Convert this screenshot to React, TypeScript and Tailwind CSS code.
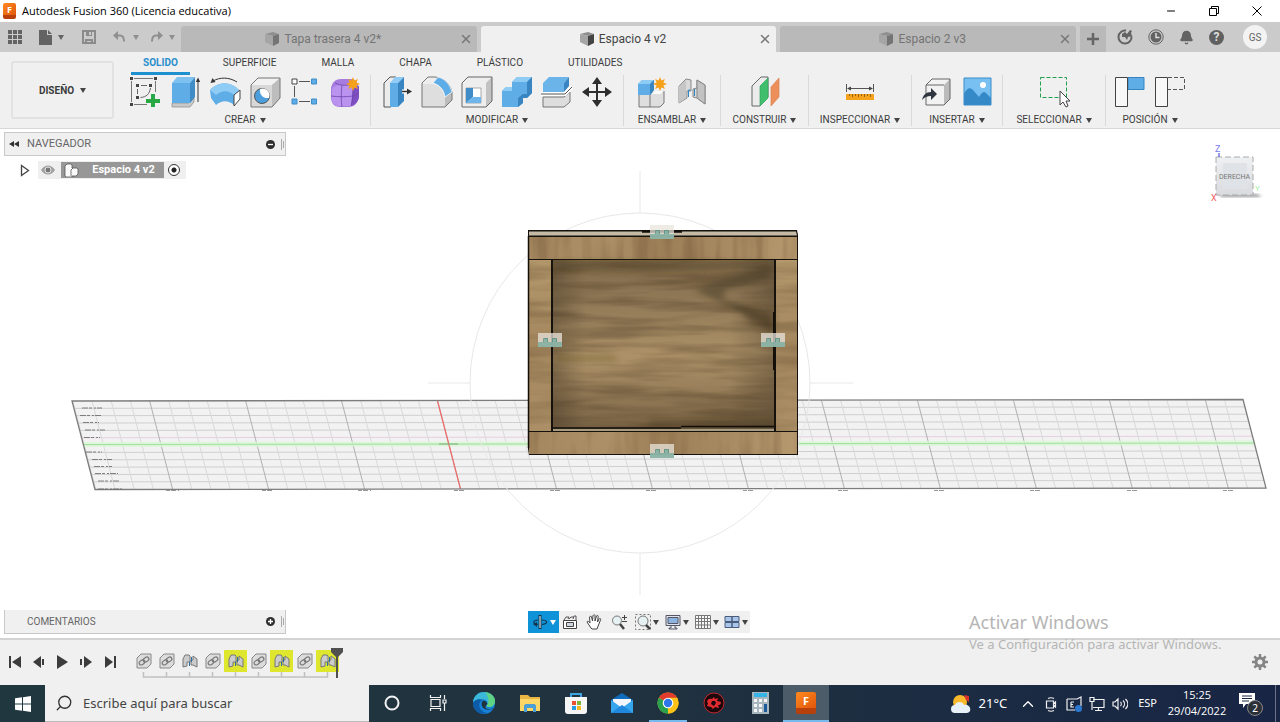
import type { ReactNode } from 'react'
import { Bell, X, Minus, ChevronUp, Search } from 'lucide-react'

const Caret = ({ className = 'text-[#444]' }: { className?: string }) => (
  <svg viewBox="0 0 6 5" className={`h-[5px] w-[6px] shrink-0 ${className}`} aria-hidden="true">
    <path d="M0 0h6L3 5z" fill="currentColor" />
  </svg>
)

const Ico = ({ children, className = 'h-8 w-8', box = '0 0 32 32' }: { children: ReactNode; className?: string; box?: string }) => (
  <svg viewBox={box} fill="none" className={`shrink-0 ${className}`} aria-hidden="true">
    {children}
  </svg>
)

/* ---------- ribbon icons ---------- */

const Spark = ({ x, y }: { x: number; y: number }) => (
  <path
    transform={`translate(${x} ${y})`}
    d="M0-7l1.500 3.600L5-5 3.400-1.500 7 0 3.400 1.500 5 5 1.500 3.400 0 7l-1.500-3.600L-5 5l1.600-3.500L-7 0l3.600-1.500L-5-5l3.500 1.600z"
    fill="#f5a11c"
  />
)

const SketchIcon = () => (
  <Ico>
    <path d="M5 2.500h19M2.500 5v21M5 28.500h13M26.500 5v11" stroke="#777" />
    <path d="M1 1h3v3H1zM25 1h3v3h-3zM1 27h3v3H1zM7 8h3v3H7zM20 8h3v3h-3zM7 20h3v3H7z" fill="#444" />
    <path d="M12 9.500h6M8.500 13v5M21.500 12c-1 6-4 9-10 9.500" stroke="#666" />
    <path d="M22 18h4v5h5v4h-5v4h-4v-4h-5v-4h5z" fill="#27a844" />
  </Ico>
)

const ExtrudeIcon = () => (
  <Ico>
    <path d="M3 27h17l5-5v4l-4 5H3z" fill="#c9c9c9" stroke="#888" strokeWidth=".7" />
    <path d="M3 7l5-6h18l-5 6z" fill="#7dc1f1" />
    <path d="M3 7h18v20H3z" fill="#5fade6" />
    <path d="M21 7l5-6v20l-5 6z" fill="#3f8cc7" />
    <path d="M29 26V4" stroke="#333" />
    <path d="M26.800 6L29 1.500 31.200 6z" fill="#333" />
  </Ico>
)

const RevolveIcon = () => (
  <Ico>
    <path d="M1 14c8-9 21-9 29 0l-5 6v9c-6-5-12-5-18 0L2 22z" fill="#5fade6" />
    <path d="M1 14c8-9 21-9 29 0l-5 5c-6-5-12-5-18 0z" fill="#8ecbf5" />
    <path d="M25 19l6-5v9l-6 7z" fill="#fff" stroke="#444" />
    <path d="M4 5c7-4 16-4 24 1" stroke="#333" />
    <path d="M1.500 7l2-5 3 4z" fill="#333" />
  </Ico>
)

const CubeBody = () => (
  <>
    <path d="M2 9l7-7h22v20l-8 9H2z" fill="#d8d8d8" />
    <path d="M2 9l7-7h22l-8 7z" fill="#f1f1f1" />
    <path d="M23 9l8-7v20l-8 9z" fill="#bdbdbd" />
    <path d="M2 9l7-7h22v20l-8 9H2z" stroke="#777" />
  </>
)

const HoleIcon = () => (
  <Ico>
    <CubeBody />
    <circle cx="13" cy="20" r="7.500" fill="#4c9fdc" stroke="#555" />
    <path d="M11 12.900a7 7 0 0 1 9 9C15 23 10 19 11 12.900z" fill="#fff" />
  </Ico>
)

const PatternIcon = () => (
  <Ico>
    <path d="M10 5.500h11M5.500 10v11M10 25.500h11" stroke="#555" />
    <path d="M3 3h5v5H3z" fill="#fff" stroke="#444" />
    <path d="M22.500 3h5v5h-5zM22.500 23h5v5h-5zM3 23h5v5H3z" fill="#5fade6" stroke="#3f8cc7" />
  </Ico>
)

const FormIcon = () => (
  <Ico>
    <path d="M2 12c1-6 5-9 10-9h10c5 1 7 4 8 9v9c-1 6-5 10-10 10h-9C5 31 2 27 2 21z" fill="#a77be0" />
    <path d="M3 13c3-6 17-5 21-1l-2 18H9c-4-1-7-4-6-9z" fill="#b993ee" />
    <path d="M24 12l6-2v11c-1 5-4 8-8 9z" fill="#7d4fc0" />
    <path d="M2 20c7 1 15 1 22 0l6-3M13 9c-1 7-1 15 0 22M24 11c0 8 0 13-2 19M6 7c6 3 13 3 19 0" stroke="#6f45ae" strokeWidth=".8" />
    <Spark x={24} y={8} />
  </Ico>
)

const PressPullIcon = () => (
  <Ico>
    <path d="M3 7l6-6h6v24l-5 6H3z" fill="#ececec" stroke="#555" />
    <path d="M9 7h8v24H9z" fill="#5fade6" />
    <path d="M9 7l5-6h9l-6 6z" fill="#8ecbf5" />
    <path d="M17 7l6-6v24l-6 6z" fill="#3985c2" />
    <path d="M21 15.500h6" stroke="#fff" strokeWidth="4" />
    <path d="M21 15.500h6" stroke="#333" strokeWidth="1.500" />
    <path d="M26 12.500l5 3-5 3z" fill="#333" />
  </Ico>
)

const FilletIcon = () => (
  <Ico>
    <path d="M1 7l6-6h7c9 1 15 7 17 15v8l-7 7H1z" fill="#ededed" />
    <path d="M1 8h8c8 0 14 6 15 13v10H1z" fill="#dedede" />
    <path d="M24 21l7-5v8l-7 7z" fill="#bcbcbc" />
    <path d="M1 7l6-6h7c9 1 15 7 17 15v8l-7 7H1z" stroke="#777" />
    <path d="M12 7l5-6c8 2 12 8 14 15l-7 5c-1-7-5-12-12-14z" fill="#5fade6" stroke="#fff" strokeWidth=".7" />
  </Ico>
)

const ShellIcon = () => (
  <Ico>
    <path d="M1 7l6-6h24v24l-6 6H1z" fill="#eee" />
    <path d="M25 7l6-6v24l-6 6z" fill="#c2c2c2" />
    <path d="M1 7l6-6h24v24l-6 6H1z" stroke="#666" />
    <path d="M5 12h15v15H5z" fill="#fff" stroke="#888" strokeWidth=".7" />
    <path d="M5 12h7v9l-7 6z" fill="#3f8cc7" />
    <path d="M12 21h8v6H5z" fill="#6db5eb" />
  </Ico>
)

const CombineIcon = () => (
  <Ico>
    <path d="M1 15l4-4h6V6l5-5h15v16l-5 5h-4v5l-5 4H1z" fill="#5fade6" />
    <path d="M1 15l4-4h6v4zM11 6l5-5h15l-5 5z" fill="#8ecbf5" />
    <path d="M26 6l5-5v16l-5 5h-4v5l-5 4v-9l5-4h4z" fill="#3985c2" />
  </Ico>
)

const SplitIcon = () => (
  <Ico>
    <path d="M2 7l6-6h20l-5 6v9H2z" fill="#6bb4ea" />
    <path d="M23 7l5-6v9l-5 6z" fill="#3985c2" />
    <path d="M2 21h21l6-5v10l-6 5H2z" fill="#ddd" stroke="#777" />
    <path d="M0 18h24l7-7" stroke="#fff" strokeWidth="4" />
    <path d="M0 18h24l7-7" stroke="#555" />
  </Ico>
)

const MoveIcon = () => (
  <Ico>
    <path d="M16 5v22M5 16h22" stroke="#2e2e2e" strokeWidth="2" />
    <path d="M16 1l5 7H11zM16 31l-5-7h10zM1 16l7-5v10zM31 16l-7 5V11z" fill="#2e2e2e" />
  </Ico>
)

const NewComponentIcon = () => (
  <Ico>
    <path d="M3 17h22l3-2v12l-4 4H3z" fill="#dedede" stroke="#777" />
    <path d="M14 18v13" stroke="#777" />
    <path d="M15 18l4-3h9l-3 3z" fill="#fafafa" />
    <path d="M2 8l4-4h12v10l-4 5H2z" fill="#5fade6" />
    <path d="M2 8l4-4h12l-4 4z" fill="#8ecbf5" />
    <path d="M14 8l4-4v10l-4 5z" fill="#3985c2" />
    <Spark x={24} y={8} />
  </Ico>
)

const JointIcon = () => (
  <Ico>
    <path d="M3 10l7-7 5 1v11h-4v7l-8 5z" fill="#d9d9d9" stroke="#888" />
    <path d="M3 10l7-6v18l-7 5z" fill="#c6c6c6" />
    <path d="M29 9l-8-5v8l-4 1v8l4 1 8 6z" fill="#d9d9d9" stroke="#888" />
    <path d="M21 4l8 5v19l-8-6z" fill="#c2c2c2" stroke="#888" />
    <path d="M12.500 14v7M12.500 14h2M18.500 13v7" stroke="#2d88c9" />
  </Ico>
)

const PlaneIcon = () => (
  <Ico>
    <path d="M3 10l9-9h7v20l-8 9H3z" fill="#ececec" stroke="#666" />
    <path d="M11 10l8-8v20l-8 8z" fill="#3fbf6d" stroke="#35a860" strokeWidth=".7" />
    <path d="M22 11l8-9v19l-8 9z" fill="#ec8f5b" stroke="#dd8250" strokeWidth=".7" />
  </Ico>
)

const MeasureIcon = () => (
  <Ico>
    <path d="M2.500 8v8M29.500 8v8M5 12.500h22" stroke="#555" />
    <path d="M3 12.500l4-2v4zM29 12.500l-4-2v4z" fill="#444" />
    <path d="M2 18h28v6H2z" fill="#f5a31c" />
    <path d="M5.500 18v2M8.500 18v3M11.500 18v2M14.500 18v3M17.500 18v2M20.500 18v3M23.500 18v2M26.500 18v3" stroke="#7b5410" strokeWidth=".8" />
  </Ico>
)

const InsertIcon = () => (
  <Ico>
    <path d="M5 9l6-6h18v20l-6 6H5z" fill="#f2f2f2" />
    <path d="M23 9l6-6v20l-6 6z" fill="#bbb" />
    <path d="M5 9h18M5 9l6-6h18v20l-6 6H5z" stroke="#666" />
    <path d="M1 24c1-5 4-8 9-8v-4l6 6-6 6v-4c-4 0-6 1-9 4z" fill="#2f3640" />
  </Ico>
)

const CanvasIcon = () => (
  <Ico>
    <path d="M3 2h27v27H3z" fill="#78bff2" />
    <path d="M3 18c3-6 6-7 9-4l6 7c3-5 5-6 7-4l5 5v7H3z" fill="#3489c6" />
    <circle cx="22" cy="9" r="3" fill="#fff" />
    <path d="M3 2h27v27H3z" stroke="#3b8dca" />
  </Ico>
)

const SelectIcon = () => (
  <Ico>
    <path d="M2.500 1.500h26v20h-26z" stroke="#1fa04c" strokeDasharray="4 2" />
    <path d="M22 15v14l3-3 3 5 2-1-2-5h4z" fill="#fff" stroke="#444" />
  </Ico>
)

const CaptureIcon = () => (
  <Ico>
    <path d="M14 1.500h16v12H14z" fill="#5fade6" stroke="#3985c2" />
    <path d="M1.500 1.500h12v29h-12z" fill="#f8f8f8" stroke="#444" />
  </Ico>
)

const RevertIcon = () => (
  <Ico>
    <path d="M14 1.500h16.500v12H14" stroke="#555" strokeDasharray="4 2" />
    <path d="M1.500 1.500h12v29h-12z" fill="#f8f8f8" stroke="#444" />
  </Ico>
)

type Tool = { name: string; icon: ReactNode }
type Group = { label: string; width: string; tools: Tool[] }

const groups: Group[] = [
  {
    label: 'CREAR',
    width: 'w-[251px]',
    tools: [
      { name: 'Crear boceto', icon: <SketchIcon /> },
      { name: 'Extrusión', icon: <ExtrudeIcon /> },
      { name: 'Revolución', icon: <RevolveIcon /> },
      { name: 'Agujero', icon: <HoleIcon /> },
      { name: 'Patrón', icon: <PatternIcon /> },
      { name: 'Crear forma', icon: <FormIcon /> },
    ],
  },
  {
    label: 'MODIFICAR',
    width: 'w-[253px]',
    tools: [
      { name: 'Pulsar/Tirar', icon: <PressPullIcon /> },
      { name: 'Empalme', icon: <FilletIcon /> },
      { name: 'Vaciado', icon: <ShellIcon /> },
      { name: 'Combinar', icon: <CombineIcon /> },
      { name: 'Dividir', icon: <SplitIcon /> },
      { name: 'Desplazar', icon: <MoveIcon /> },
    ],
  },
  {
    label: 'ENSAMBLAR',
    width: 'w-[97px]',
    tools: [
      { name: 'Nuevo componente', icon: <NewComponentIcon /> },
      { name: 'Unión', icon: <JointIcon /> },
    ],
  },
  { label: 'CONSTRUIR', width: 'w-[88px]', tools: [{ name: 'Plano de desfase', icon: <PlaneIcon /> }] },
  { label: 'INSPECCIONAR', width: 'w-[103px]', tools: [{ name: 'Medir', icon: <MeasureIcon /> }] },
  {
    label: 'INSERTAR',
    width: 'w-[91px]',
    tools: [
      { name: 'Insertar derivado', icon: <InsertIcon /> },
      { name: 'Lienzo', icon: <CanvasIcon /> },
    ],
  },
  { label: 'SELECCIONAR', width: 'w-[103px]', tools: [{ name: 'Seleccionar', icon: <SelectIcon /> }] },
  {
    label: 'POSICIÓN',
    width: 'w-[88px]',
    tools: [
      { name: 'Capturar posición', icon: <CaptureIcon /> },
      { name: 'Revertir', icon: <RevertIcon /> },
    ],
  },
]

const ribbonTabs = ['SOLIDO', 'SUPERFICIE', 'MALLA', 'CHAPA', 'PLÁSTICO', 'UTILIDADES']

/* ---------- header ---------- */

const FusionLogo = ({ className }: { className: string }) => (
  <span className={`flex shrink-0 flex-col items-center rounded-[2px] bg-gradient-to-br from-[#ff8a1f] to-[#e0560a] font-bold leading-none text-white ${className}`}>
    F
  </span>
)

const TitleBar = () => (
  <header className="flex h-[22px] items-center bg-white pl-[3px] font-['Open_Sans',sans-serif]">
    <FusionLogo className="h-4 w-[13px] border-b-4 border-[#b8400a] pt-[2px] text-[9px]" />
    <h1 className="ml-[6px] flex-1 text-[11px] text-black">Autodesk Fusion 360 (Licencia educativa)</h1>
    <div className="flex h-5 items-center pr-[2px] text-black">
      <button aria-label="Minimizar" className="flex w-[43px] justify-center"><Minus size={12} strokeWidth={2} /></button>
      <button aria-label="Restaurar" className="flex w-[43px] justify-center">
        <Ico box="0 0 10 10" className="h-[10px] w-[10px]">
          <path d="M.5 2.500h7v7h-7zM2.500 2.500v-2h7v7h-2" stroke="#000" />
        </Ico>
      </button>
      <button aria-label="Cerrar" className="flex w-[43px] justify-center">
        <Ico box="0 0 10 10" className="h-[10px] w-[10px]">
          <path d="M.5.5l9 9M9.500.5l-9 9" stroke="#000" />
        </Ico>
      </button>
    </div>
  </header>
)

const DocCube = () => (
  <Ico box="0 0 16 16" className="h-4 w-4">
    <path d="M1 3l8-2 6 2-6 2z" fill="#8f8f8f" />
    <path d="M1 3l8 2v10l-8-4z" fill="#a5a5a5" />
    <path d="M9 5l6-2v9l-6 3z" fill="currentColor" />
  </Ico>
)

const DocTab = ({ title, active = false }: { title: string; active?: boolean }) => (
  <div
    className={`flex flex-1 items-center rounded-t-[3px] pr-1 text-[12px] ${
      active ? 'bg-[#f0f0f0] text-[#444]' : 'bg-[#b9b9b9] text-[#747474]'
    }`}
  >
    <button className="flex flex-1 items-center justify-center gap-1 pl-[6px]">
      <DocCube />
      {title}
    </button>
    <button aria-label={`Cerrar ${title}`} className="text-[#777]"><X size={14} strokeWidth={2.5} /></button>
  </div>
)

const QuickBar = () => (
  <div className="flex h-[30px] bg-[#cbcbcb] text-[#636363]">
    <div className="flex w-[181px] shrink-0 items-center pl-2">
      <button aria-label="Panel de datos">
        <Ico box="0 0 14 14" className="h-[14px] w-[14px]">
          <path d="M0 0h4v4H0zM5 0h4v4H5zM10 0h4v4h-4zM0 5h4v4H0zM5 5h4v4H5zM10 5h4v4h-4zM0 10h4v4H0zM5 10h4v4H5zM10 10h4v4h-4z" fill="currentColor" />
        </Ico>
      </button>
      <button aria-label="Archivo" className="ml-[17px] flex items-center gap-[6px]">
        <Ico box="0 0 13 15" className="h-[15px] w-[13px]">
          <path d="M0 0h8v5h5v10H0z" fill="currentColor" />
          <path d="M9 0l4 4H9z" fill="currentColor" />
        </Ico>
        <Caret className="text-[#636363]" />
      </button>
      <button aria-label="Guardar" className="ml-[18px] text-[#8b8b8b]">
        <Ico box="0 0 14 14" className="h-[14px] w-[14px]">
          <path d="M1 1h12v12H1z" stroke="currentColor" strokeWidth="2" />
          <path d="M4 1h6v5H4zM3 9h8v5H3z" fill="currentColor" />
          <path d="M7 2h2v3H7zM5 11h4v1H5z" fill="#cbcbcb" />
        </Ico>
      </button>
      <button aria-label="Deshacer" className="ml-[17px] flex items-center gap-2 text-[#8f8f8f]">
        <Ico box="0 0 12 12" className="h-3 w-3">
          <path d="M3 4.500h4c3 0 4 2 4 6" stroke="currentColor" strokeWidth="2" />
          <path d="M0 4.500L5 0v9z" fill="currentColor" />
        </Ico>
        <Caret className="text-[#8f8f8f]" />
      </button>
      <button aria-label="Rehacer" className="ml-3 flex items-center gap-[6px] text-[#8f8f8f]">
        <Ico box="0 0 12 12" className="h-3 w-3">
          <path d="M9 4.500H5c-3 0-4 2-4 6" stroke="currentColor" strokeWidth="2" />
          <path d="M12 4.500L7 0v9z" fill="currentColor" />
        </Ico>
        <Caret className="text-[#8f8f8f]" />
      </button>
    </div>
    <nav className="flex flex-1 gap-1 pt-1" aria-label="Documentos">
      <DocTab title="Tapa trasera 4 v2*" />
      <DocTab title="Espacio 4 v2" active />
      <DocTab title="Espacio 2 v3" />
      <button aria-label="Nuevo diseño" className="flex w-[26px] items-center justify-center bg-[#b9b9b9]">
        <Ico box="0 0 12 12" className="h-3 w-3"><path d="M6 0v12M0 6h12" stroke="#666" strokeWidth="2.500" /></Ico>
      </button>
    </nav>
    <div className="flex w-[174px] shrink-0 items-center gap-[15px] pl-[11px]">
      <button aria-label="Extensiones">
        <Ico box="0 0 16 16" className="h-4 w-4">
          <path d="M9 1.600a6.500 6.500 0 1 0 5.400 5.400" stroke="currentColor" strokeWidth="2" />
          <path d="M5 5l3-2 2 2 3-4 2 1-1 2 1 3-4 1-1 3-2-3-3 0z" fill="currentColor" />
        </Ico>
      </button>
      <button aria-label="Estado de trabajos">
        <Ico box="0 0 16 16" className="h-4 w-4">
          <circle cx="8" cy="8" r="7.200" stroke="currentColor" />
          <circle cx="8" cy="8" r="5.500" fill="currentColor" />
          <path d="M8 4v4.500h3.500" stroke="#ddd" strokeWidth="1.500" />
        </Ico>
      </button>
      <button aria-label="Notificaciones"><Bell size={15} fill="currentColor" /></button>
      <button aria-label="Ayuda" className="flex h-[15px] w-[15px] items-center justify-center rounded-full bg-[#606060] text-[12px] font-bold leading-none text-[#ddd]">?</button>
      <button aria-label="Cuenta" className="ml-1 flex h-6 w-6 items-center justify-center rounded-full bg-[#f3f3f3] text-[10px] text-[#666]">GS</button>
    </div>
  </div>
)

const Ribbon = () => (
  <section className="flex h-[77px] border-b border-[#d8d8d8] bg-[#f0f0f0] text-[#3c3c3c]">
    <button className="mb-[9px] ml-[11px] mt-[9px] flex w-[103px] shrink-0 items-center justify-center gap-[6px] rounded-[3px] border-2 border-[#e2e2e2] text-[10px] font-bold">
      DISEÑO <Caret />
    </button>
    <div className="ml-[6px] flex flex-1 flex-col">
      <nav className="flex h-[23px] gap-[21px] pl-[11px]" aria-label="Espacios">
        {ribbonTabs.map((tab, i) => (
          <button
            key={tab}
            className={`border-b-[3px] px-3 pt-px text-[10px] leading-[19px] ${
              i === 0 ? 'border-[#1e8fcf] font-bold text-[#2a8fcb]' : 'border-transparent'
            }`}
          >
            {tab}
          </button>
        ))}
      </nav>
      <div className="flex flex-1 pb-[2px]">
        {groups.map((g) => (
          <div key={g.label} className={`flex shrink-0 flex-col items-center justify-between border-r border-[#d9d9d9] last:border-r-0 ${g.width}`}>
            <div className="flex">
              {g.tools.map((t) => (
                <button key={t.name} aria-label={t.name} className="flex w-10 justify-center pt-px">
                  {t.icon}
                </button>
              ))}
            </div>
            <button className="flex items-center gap-1 text-[10px] leading-3">
              {g.label} <Caret />
            </button>
          </div>
        ))}
      </div>
    </div>
  </section>
)

/* ---------- viewport ---------- */

// where the red axis meets the far edge of the ground grid
const axisX = 437.5
const cell = 19.2

const GroundGrid = () => {
  const columns = Array.from({ length: 61 }, (_, i) => i - 19)
  const rows = Array.from({ length: 11 }, (_, i) => i + 1)
  return (
    <g>
      <path d="M72 401L1243 399.500 1266 488 95 489.500z" fill="#f2f2f2" />
      {rows.map((r) => (
        <path
          key={r}
          d={`M${72 + r * 1.92} ${401 + r * 7.35}L${1243 + r * 1.92} ${399.5 + r * 7.35}`}
          stroke={r === 5 ? '#e6cfe0' : '#cfcfcf'}
        />
      ))}
      {columns.map((c) => (
        <path
          key={c}
          d={`M${axisX + c * cell} 400.500l23 88.500`}
          stroke={c % 5 === 0 ? '#b0b0b0' : '#dadada'}
        />
      ))}
      <path d="M83 444.500L1255 443" stroke="#dcf7d8" strokeWidth="5" opacity=".8" />
      <path d="M83 444.500L1255 443" stroke="#9fe29a" />
      <path d="M437.500 401l23 88" stroke="#f06a6a" strokeWidth="1.200" />
      <path d="M439 444h19" stroke="#7fae7f" />
      <path d="M72 401L1243 399.500 1266 488 95 489.500z" stroke="#7d7d7d" strokeWidth="1.300" fill="none" />
      <path
        d="M82 408h20M80 415.500h22M83 422.500h16M85 430h20M84 437.500h16M86 452h16M92 459.500h20M94 466.500h18M95 473.500h23M98 481h22M98 489h24"
        stroke="#666"
        strokeWidth=".8"
        strokeDasharray="6 1 3 2 2 1"
      />
      <path
        d="M166 490.500h13M262 490.500h12M358 490.500h13M454 490.500h12M550 490.500h12M646 490.500h12M743 490.500h12M838 490.500h12M934 490.500h12M1030 490.500h12M1127 490.500h12M1223 490.500h12"
        stroke="#999"
        strokeDasharray="4 1 5 2"
      />
    </g>
  )
}

const JointMark = ({ x, y }: { x: number; y: number }) => (
  <g transform={`translate(${x} ${y})`}>
    <path d="M0 0h24v14H0z" fill="#e9e4dc" opacity=".75" />
    <path d="M0 9h6V5h4v4h4V5h5v4h5v5H0z" fill="#7fae9f" opacity=".85" />
    <path d="M5.500 9V5.500h4V9M14.500 9V5.500h4V9" fill="none" stroke="#5d8f84" strokeWidth=".8" />
  </g>
)

const WoodBox = () => (
  <g>
    <path d="M528 230h269l1 5v220H529l-1-6z" fill="#15120d" />
    <path d="M529 231.500h267l1 4H529z" fill="#c4baa5" />
    <path d="M529 237h268v22H529z" fill="url(#board)" />
    <path d="M529 432h268v22H529z" fill="url(#board)" />
    <path d="M529 260h22v171h-22zM776 260h21v171h-21z" fill="url(#side)" />
    <path d="M529 237h268v22H529zM529 432h268v22H529z" filter="url(#grainV)" opacity=".22" />
    <path d="M529 260h22v171h-22zM776 260h21v171h-21z" filter="url(#grainH)" opacity=".2" />
    <path d="M553 260h221v168H553z" fill="url(#inner)" />
    <path d="M553 260h221v168H553z" filter="url(#grainH)" opacity=".3" />
    <path d="M553 260h221v168H553z" fill="url(#shade)" />
    <g filter="url(#soft)" fill="#44351f">
      <path d="M694 290l26-10 50-14v12l-44 12-4 8 50 18v14l-40-22z" opacity=".5" />
      <path d="M738 306l36 4v22l-24-8z" opacity=".35" />
      <path d="M556 262h214v5l-120 6-94-4z" opacity=".4" />
      <path d="M556 356h60v4h-60zM650 420h122v6H650z" opacity=".4" />
    </g>
    <path d="M553 428.500h221v2.500H553z" fill="#a99b80" />
    <path d="M553 428h128M681 426.500h93" stroke="#120e08" strokeWidth="1.300" />
    <path d="M774 312v58" stroke="#120e08" strokeWidth="2" />
    <path d="M642 231.500h40" stroke="#120e08" strokeWidth="2.500" />
    <path d="M528.500 236v212" stroke="#120e08" strokeWidth="1.500" />
  </g>
)

const Scene = () => (
  <svg
    viewBox="0 129 1280 509"
    preserveAspectRatio="xMidYMid slice"
    className="absolute inset-0 h-full w-full"
    role="img"
    aria-label="Vista derecha del modelo Espacio 4"
  >
    <defs>
      <linearGradient id="board" x2="1" y2="0">
        <stop offset="0" stopColor="#a4875f" />
        <stop offset=".3" stopColor="#ad9067" />
        <stop offset=".5" stopColor="#9c7e57" />
        <stop offset=".75" stopColor="#a98b63" />
        <stop offset="1" stopColor="#b7996f" />
      </linearGradient>
      <linearGradient id="side" x2="0" y2="1">
        <stop offset="0" stopColor="#b4986c" />
        <stop offset=".5" stopColor="#a4875e" />
        <stop offset="1" stopColor="#ac8f66" />
      </linearGradient>
      <linearGradient id="inner" x2="0" y2="1">
        <stop offset="0" stopColor="#806a4b" />
        <stop offset=".3" stopColor="#957d5a" />
        <stop offset=".57" stopColor="#ad9268" />
        <stop offset=".8" stopColor="#957c58" />
        <stop offset="1" stopColor="#756043" />
      </linearGradient>
      <linearGradient id="shade" x2="1" y2="0">
        <stop offset="0" stopColor="#3a2f1e" stopOpacity=".35" />
        <stop offset=".15" stopColor="#3a2f1e" stopOpacity="0" />
        <stop offset=".8" stopColor="#3a2f1e" stopOpacity="0" />
        <stop offset="1" stopColor="#3a2f1e" stopOpacity=".35" />
      </linearGradient>
      <filter id="grainH" x="0" y="0" width="100%" height="100%" colorInterpolationFilters="sRGB">
        <feTurbulence type="fractalNoise" baseFrequency=".009 .09" numOctaves="3" seed="4" />
        <feColorMatrix values="0 0 0 0 .25  0 0 0 0 .18  0 0 0 0 .1  3 0 0 0 -1.200" />
        <feComposite in2="SourceGraphic" operator="in" />
      </filter>
      <filter id="grainV" x="0" y="0" width="100%" height="100%" colorInterpolationFilters="sRGB">
        <feTurbulence type="fractalNoise" baseFrequency=".06 .008" numOctaves="3" seed="9" />
        <feColorMatrix values="0 0 0 0 .3  0 0 0 0 .2  0 0 0 0 .1  3 0 0 0 -1.200" />
        <feComposite in2="SourceGraphic" operator="in" />
      </filter>
      <filter id="soft"><feGaussianBlur stdDeviation="3" /></filter>
    </defs>
    <GroundGrid />
    <g fill="none" stroke="#e8e8e8">
      <circle cx="640" cy="383" r="170" />
      <path d="M640 171v42M640 553v42M428 383h42M810 383h43" />
    </g>
    <WoodBox />
    <JointMark x={650} y={225} />
    <JointMark x={538} y={333} />
    <JointMark x={761} y={333} />
    <JointMark x={650} y={444} />
  </svg>
)

const ViewCube = () => (
  <svg viewBox="0 0 60 64" className="mr-3 mt-2 h-16 w-[60px] font-['Roboto',sans-serif]" role="img" aria-label="Derecha">
    <defs>
      <linearGradient id="cubeFace" x2="0" y2="1">
        <stop offset="0" stopColor="#eef0f2" />
        <stop offset="1" stopColor="#d9dbde" />
      </linearGradient>
      <filter id="cubeShadow"><feGaussianBlur stdDeviation="1.500" /></filter>
    </defs>
    <path d="M10 54h38l6 2-4 1H14z" fill="#999" filter="url(#cubeShadow)" />
    <path d="M8 17h37v38H8z" fill="url(#cubeFace)" stroke="#aaa" strokeDasharray="6 3" />
    <path d="M15 23h24v26H15z" fill="#dfe2e6" />
    <path d="M11 13v4" stroke="#7575e0" strokeWidth="1.500" />
    <text x="7" y="12" fontSize="9" fill="#7b7bee">Z</text>
    <text x="3" y="61" fontSize="9" fill="#ee5a5a">X</text>
    <text x="47" y="51" fontSize="8" fill="#a5eda5">Y</text>
    <text x="11" y="39" fontSize="7" fill="#777">DERECHA</text>
  </svg>
)

const RoundSign = ({ plus = false }: { plus?: boolean }) => (
  <Ico box="0 0 9 9" className="h-[9px] w-[9px]">
    <circle cx="4.500" cy="4.500" r="4.500" fill="#2f2f2f" />
    <path d={plus ? 'M2 4.500h5M4.500 2v5' : 'M2 4.500h5'} stroke="#fff" strokeWidth="1.300" />
  </Ico>
)

const Grip = () => (
  <Ico box="0 0 3 11" className="ml-[6px] mr-px h-[11px] w-[3px]">
    <path d="M.5 0v11M2.500 2v7" stroke="#aaa" />
  </Ico>
)

const Browser = () => (
  <aside className="w-[282px]">
    <div className="flex h-6 items-center border border-[#c8c8c8] bg-[#f0f0f0] text-[11px] text-[#666]">
      <button aria-label="Contraer navegador" className="ml-1">
        <Ico box="0 0 10 6" className="h-[6px] w-[10px]"><path d="M5 0v6L0 3zM10 0v6L5 3z" fill="#333" /></Ico>
      </button>
      <h2 className="ml-2 flex-1">NAVEGADOR</h2>
      <button aria-label="Minimizar navegador"><RoundSign /></button>
      <Grip />
    </div>
    <div className="ml-4 mt-[5px] flex h-[18px] items-center">
      <button aria-label="Expandir" className="mr-2">
        <Ico box="0 0 10 13" className="h-[13px] w-[10px]"><path d="M1.500 1.500v10L8.500 6.500z" fill="#fff" stroke="#444" strokeWidth="1.300" /></Ico>
      </button>
      <div className="flex h-[18px] items-center bg-[#efefef] pl-[3px] pr-[6px]">
        <button aria-label="Visibilidad" className="mr-[6px]">
          <Ico box="0 0 14 10" className="h-[10px] w-[14px]">
            <path d="M0 5c4-6 10-6 14 0-4 6-10 6-14 0z" fill="#a0a0a0" />
            <circle cx="7" cy="5" r="3" fill="#777" stroke="#e5e5e5" />
          </Ico>
        </button>
        <div className="flex h-4 w-[103px] items-center bg-[#979797] pl-[3px]">
          <Ico box="0 0 15 14" className="h-[14px] w-[15px]">
            <path d="M1 3l2-2h4l1 1v3h5l1 1v5l-2 2H8v1H2l-1-1z" fill="#fafafa" stroke="#555" strokeWidth=".8" />
            <path d="M7 13V7l2-2" stroke="#555" strokeWidth=".8" />
          </Ico>
          <span className="flex-1 pl-1 text-center text-[11px] font-bold text-white">Espacio 4 v2</span>
        </div>
        <input
          type="radio"
          defaultChecked
          aria-label="Activar componente"
          className="ml-1 h-3 w-3 appearance-none rounded-full border border-[#333] bg-[radial-gradient(circle,#222_0_2px,#fff_3px)]"
        />
      </div>
    </div>
  </aside>
)

const navTools: { name: string; width: string; icon: ReactNode; menu?: boolean; active?: boolean }[] = [
  {
    name: 'Orbitar', width: 'w-[31px]', menu: true, active: true,
    icon: (
      <>
        <path d="M8 1v14" stroke="#12354d" strokeWidth="3" />
        <path d="M8 2v12" stroke="#fff" />
        <path d="M6 6C1 6 0 10 6 10.500M10 6c6 0 6 4 0 4.500" stroke="#12354d" strokeWidth="1.200" />
        <path d="M1 10l4-2v5z" fill="#12354d" />
      </>
    ),
  },
  {
    name: 'Mirar a', width: 'w-[22px]',
    icon: (
      <>
        <path d="M1.500 6.500h13v8h-13z" fill="#fff" stroke="#444" />
        <path d="M4.500 8.500h7v4h-7z" fill="#cfd6e0" stroke="#444" />
        <path d="M2 6l2-3h3l-1 2M7 5l2-2h2M11 5l1-3h2v4" stroke="#555" />
      </>
    ),
  },
  {
    name: 'Encuadre', width: 'w-[25px]',
    icon: (
      <path
        d="M5 14L1 8c0-1 2-1 3 1L3.500 3c.5-1 2-1 2 0l1 4L7 1.500c.5-1 2-1 2 0V7l1.500-5c.5-1 2-.5 1.700.5L11.500 8l1.500-3c.8-1 2-.5 1.700.5L12.500 11 11 15H6z"
        fill="#fff" stroke="#444"
      />
    ),
  },
  {
    name: 'Zoom', width: 'w-[25px]',
    icon: (
      <>
        <circle cx="6" cy="6.500" r="4.500" fill="#e6f1f3" stroke="#777" />
        <path d="M9 10l4 5" stroke="#444" strokeWidth="2.500" />
        <path d="M11 3.500h5M13.500 1v5M11 7.500h5" stroke="#444" />
      </>
    ),
  },
  {
    name: 'Ventana de zoom', width: 'w-[31px]', menu: true,
    icon: (
      <>
        <path d="M.5.5h15v15H.5z" stroke="#777" strokeDasharray="2 2" />
        <circle cx="8" cy="7" r="5" fill="#e6f1f3" stroke="#777" />
        <path d="M11 11l4 4" stroke="#444" strokeWidth="2.500" />
      </>
    ),
  },
  {
    name: 'Configuración de visualización', width: 'w-[30px]', menu: true,
    icon: (
      <>
        <path d="M1 1.500h14v10H1z" fill="#dfe5ee" stroke="#556" />
        <path d="M3 3.500h10v6H3z" fill="#8db4e0" stroke="#556" />
        <path d="M6 12v2H4v1h8v-1h-2v-2" stroke="#556" />
      </>
    ),
  },
  {
    name: 'Rejilla y forzados', width: 'w-[29px]', menu: true,
    icon: <path d="M.5 1.500h15v13H.5zM3.500 1v14M6.500 1v14M9.500 1v14M12.500 1v14M0 4.500h16M0 7.500h16M0 11h16" stroke="#777" fill="#f8f8f8" />,
  },
  {
    name: 'Ventanas gráficas', width: 'w-[29px]', menu: true,
    icon: <path d="M1 2.500h7v5H1zM8 2.500h7v5H8zM1 8.500h7v5H1zM8 8.500h7v5H8z" fill="#a9c6ea" stroke="#4a5d7c" />,
  },
]

const NavBar = () => (
  <nav className="absolute bottom-[5px] left-1/2 -ml-28 flex h-[22px] bg-[#f0f0f0]" aria-label="Navegación">
    {navTools.map((t) => (
      <button
        key={t.name}
        aria-label={t.name}
        className={`flex items-center justify-center gap-[2px] ${t.width} ${t.active ? 'bg-[#0f93d8]' : ''}`}
      >
        <Ico box="0 0 16 16" className="h-4 w-4">{t.icon}</Ico>
        {t.menu && <Caret className={t.active ? 'text-white' : 'text-[#444]'} />}
      </button>
    ))}
  </nav>
)

const Viewport = () => (
  <main className="relative flex min-h-[300px] flex-1 flex-col justify-between bg-white">
    <Scene />
    <div className="relative flex items-start justify-between pl-1 pt-[3px]">
      <Browser />
      <ViewCube />
    </div>
    <div className="relative mb-1 ml-1 flex h-6 w-[282px] items-center border border-t-0 border-[#c8c8c8] bg-[#f0f0f0] text-[10px] text-[#666]">
      <h2 className="ml-[22px] flex-1">COMENTARIOS</h2>
      <button aria-label="Abrir comentarios"><RoundSign plus /></button>
      <Grip />
    </div>
    <NavBar />
    {/* system watermark, runs over the timeline below */}
    <div className="pointer-events-none absolute -bottom-4 right-[51px] z-10 w-[260px] whitespace-nowrap font-['Noto_Sans',sans-serif] text-[#b5b5b5]">
      <p className="text-[18px] leading-6">Activar Windows</p>
      <p className="text-[13px] leading-5">Ve a Configuración para activar Windows.</p>
    </div>
  </main>
)

/* ---------- timeline ---------- */

const playback = [
  { name: 'Inicio', d: 'M13 1v12L4 7z', bar: 'M2 1v12' },
  { name: 'Atrás', d: 'M9 1v12L1 7z', bar: 'M11 4v6' },
  { name: 'Reproducir', d: 'M1 0v14l11-7z', bar: '' },
  { name: 'Adelante', d: 'M4 1v12l8-6z', bar: 'M1 4v6' },
  { name: 'Final', d: 'M1 1v12l8-6z', bar: 'M11 1v12' },
]

const features = [
  { kind: 'link' },
  { kind: 'link' },
  { kind: 'joint' },
  { kind: 'link' },
  { kind: 'joint', marked: true },
  { kind: 'link' },
  { kind: 'joint', marked: true },
  { kind: 'link' },
  { kind: 'joint', marked: true },
]

const FeatureIcon = ({ kind }: { kind: string }) => (
  <Ico box="0 0 16 16" className="h-4 w-4">
    {kind === 'link' ? (
      <>
        <path d="M1 5l4-4h10v10l-4 4H1z" fill="#dcdcdc" stroke="#888" />
        <g transform="rotate(-35 8 8)" stroke="#777" strokeWidth="1.200">
          <rect x="2.500" y="6" width="6" height="4" rx="2" />
          <rect x="7.500" y="6" width="6" height="4" rx="2" />
        </g>
      </>
    ) : (
      <>
        <path d="M1 14V6l2-4h4l1 1v6H5v4z" fill="#ccc" stroke="#777" />
        <path d="M15 14V6l-4-3v4H9v5h2z" fill="#ccc" stroke="#777" />
        <path d="M7.500 9v4M9.500 4v5" stroke="#2c6fa8" />
      </>
    )}
  </Ico>
)

const Timeline = () => (
  <section className="flex h-[47px] border-t-2 border-[#d3d3d3] bg-[#f0f0f0]" aria-label="Línea de tiempo">
    <div className="flex h-11 items-center gap-[10px] pl-2">
      {playback.map((p) => (
        <button key={p.name} aria-label={p.name}>
          <Ico box="0 0 14 14" className="h-[14px] w-[14px]">
            <path d={p.d} fill="#3c3c3c" />
            <path d={p.bar} stroke="#3c3c3c" strokeWidth="2" />
          </Ico>
        </button>
      ))}
    </div>
    <div className="ml-[14px] mt-[10px] flex items-start">
      <ol className="flex">
        {features.map((f, i) => (
          <li key={i} className="flex flex-col">
            <button
              aria-label={`Operación ${i + 1}`}
              className={`flex h-[22px] w-[23px] items-center justify-center ${f.marked ? 'bg-[#dfe62e]' : ''}`}
            >
              <FeatureIcon kind={f.kind} />
            </button>
            <svg viewBox="0 0 23 6" className="h-[6px] w-[23px]" fill="none" stroke="#c0c0c0" strokeWidth="1.500" aria-hidden="true">
              <path d={i === 0 ? 'M11.500 0v5H23' : i === features.length - 1 ? 'M11.500 0v5H0' : 'M11.500 0v5M0 5h23'} />
            </svg>
          </li>
        ))}
      </ol>
      <Ico box="0 0 12 30" className="-ml-2 -mt-[2px] h-[30px] w-3">
        <path d="M0 0h12v4L7 9v21H5V9L0 4z" fill="#505050" />
      </Ico>
    </div>
    <button aria-label="Configuración" className="mb-[2px] ml-auto mr-3">
      <Ico box="0 0 16 16" className="h-4 w-4">
        <circle cx="8" cy="8" r="4" stroke="#858585" strokeWidth="3" />
        <path d="M8 0v3M8 13v3M0 8h3M13 8h3M2.300 2.300l2.200 2.200M11.500 11.500l2.200 2.200M13.700 2.300l-2.200 2.200M4.500 11.500l-2.200 2.200" stroke="#858585" strokeWidth="2.500" />
      </Ico>
    </button>
  </section>
)

/* ---------- taskbar ---------- */

const taskApps: { name: string; state?: 'open'; icon: ReactNode }[] = [
  { name: 'Cortana', icon: <circle cx="12" cy="12" r="6.500" stroke="#f2f2f2" strokeWidth="2" /> },
  {
    name: 'Vista de tareas',
    icon: (
      <path d="M5 8.500h9v7H5zM4.500 4v2.500h10V4M4.500 20v-2.500h10V20M18.500 4v4M18.500 12v8M17 9h3v3h-3z" stroke="#f2f2f2" strokeWidth="1.200" />
    ),
  },
  {
    name: 'Edge',
    icon: (
      <>
        <circle cx="12" cy="12" r="11" fill="#1683d8" />
        <path d="M1 11C2 4 7 1 12 1c6 0 11 4 11 9 0 4-3 6-6 6-2 0-3-1-2-2 2-3-1-6-5-6-4 0-7 2-9 3z" fill="#3cb8d8" />
        <path d="M13 1c6 1 10 4.500 10 9 0 4-3 6-6 6-2 0-3-1-2-2 3-4 1-10-2-13z" fill="#5fd283" />
        <path d="M10 9c-5 3-3 12 5 13-7 3-14-3-14-9 0-3 5-6 9-4z" fill="#0e5ba8" />
        <path d="M10.500 10c-3 5 2 11 10 8l1-1c-6 3-11 0-6-4-1-3-3-4-5-3z" fill="#20323f" />
      </>
    ),
  },
  {
    name: 'Explorador de archivos',
    icon: (
      <>
        <path d="M2 4h8l2 2h10v14H2z" fill="#eab543" />
        <path d="M2 8h20v12H2z" fill="#fcd667" />
        <path d="M6 21v-6c0-1 1-2 2-2h8c1 0 2 1 2 2v6h-3v-4H9v4z" fill="#4a9fd8" />
      </>
    ),
  },
  {
    name: 'Microsoft Store',
    icon: (
      <>
        <path d="M7 6V3h10v3" stroke="#3ba3e0" strokeWidth="2" />
        <path d="M1 6h22v14c0 2-1 3-3 3H4c-2 0-3-1-3-3z" fill="#f5f5f5" />
        <path d="M8 10h4v4H8z" fill="#e8502f" />
        <path d="M13 10h4v4h-4z" fill="#7bb63a" />
        <path d="M8 15h4v4H8z" fill="#2a9be0" />
        <path d="M13 15h4v4h-4z" fill="#f5b81f" />
      </>
    ),
  },
  {
    name: 'Correo',
    icon: (
      <>
        <path d="M1 9l11-7 11 7v13H1z" fill="#0f6cbd" />
        <path d="M3 8h18v8H3z" fill="#f2f6fb" />
        <path d="M1 9l11 8L23 9v13H1z" fill="#35a6ee" />
        <path d="M1 22l11-8 11 8z" fill="#1f88dc" />
      </>
    ),
  },
  {
    name: 'Chrome', state: 'open',
    icon: (
      <>
        <circle cx="12" cy="12" r="10.500" fill="#fbc116" />
        <path d="M12 12L2.900 6.700A10.500 10.500 0 0 1 21.100 6.700z" fill="#e33b2e" />
        <path d="M12 12v10.500A10.500 10.500 0 0 1 2.900 6.700z" fill="#2aa14c" />
        <path d="M12 6.700h9.100A10.500 10.500 0 0 1 12 22.500l4.600-8z" fill="#fbc116" />
        <circle cx="12" cy="12" r="5.300" fill="#fff" />
        <circle cx="12" cy="12" r="4.200" fill="#2f77e8" />
      </>
    ),
  },
  {
    name: 'Grabador',
    icon: (
      <>
        <circle cx="12" cy="12" r="10" fill="#1c090b" stroke="#c4252c" />
        <path d="M5 11c0-3 3-4 5-3l2-2 1 2 3-1-1 3 4 1c0 3-2 3-3 3l1 3-4-1-2 2-2-2-4-1 1-3zM10 10l-1 3 3 2 2-3-1-2z" fill="#e02a30" fillRule="evenodd" />
      </>
    ),
  },
  {
    name: 'Calculadora',
    icon: (
      <>
        <path d="M4 1h17v22H4z" fill="#a8b6bd" />
        <path d="M6 2h13v4H6z" fill="#35b4e8" />
        <path d="M6 8h3v3H6zM11 8h3v3h-3zM16 8h3v3h-3zM6 13h3v3H6zM11 13h3v3h-3zM6 18h3v3H6zM11 18h3v3h-3z" fill="#f4f6f7" />
        <path d="M16 13h3v8h-3z" fill="#1d5a9c" />
      </>
    ),
  },
]

const StatusIcon = ({ name, d }: { name: string; d: string }) => (
  <button aria-label={name} className="flex w-[23px] justify-center">
    <Ico box="0 0 16 16" className="h-4 w-4"><path d={d} stroke="#f0f0f0" strokeWidth="1.200" /></Ico>
  </button>
)

const Taskbar = () => (
  <footer className="flex h-[37px] items-stretch bg-gradient-to-r from-[#20373f] via-[#20323f] to-[#182545] font-['Noto_Sans',sans-serif] text-white">
    <button aria-label="Inicio" className="flex w-[45px] shrink-0 items-center justify-center">
      <Ico box="0 0 16 16" className="h-4 w-4">
        <path d="M0 2.300l7-1v6.200H0zM8 1.200L16 0v7.500H8zM0 8.500h7v6.200l-7-1zM8 8.500h8V16l-8-1.200z" fill="#fff" />
      </Ico>
    </button>
    <label className="flex w-[324px] shrink-0 items-center gap-2 border-b border-[#bbb] bg-[#f0f0f0] pl-[10px] text-[#333]">
      <Search size={18} strokeWidth={1.75} className="-scale-x-100" aria-hidden="true" />
      <input
        type="text"
        aria-label="Buscar"
        placeholder="Escribe aquí para buscar"
        className="w-60 bg-transparent pl-[2px] pt-[2px] text-[13px] outline-none placeholder:text-[#444]"
      />
    </label>
    <nav className="flex" aria-label="Aplicaciones">
      {taskApps.map((a) => (
        <button
          key={a.name}
          aria-label={a.name}
          className="flex w-[46px] flex-col items-center justify-between pt-[6px]"
        >
          <Ico box="0 0 24 24" className="h-6 w-6">{a.icon}</Ico>
          {a.state === 'open' && <span className="h-[2px] w-[38px] bg-[#76b9ed]" />}
        </button>
      ))}
      <button aria-label="Fusion 360" className="flex w-[46px] items-center justify-center border-b-2 border-[#76b9ed] bg-[#4c5c68]">
        <FusionLogo className="h-[22px] w-5 border-b-[6px] border-[#b8400a] pt-[3px] text-[11px]" />
      </button>
    </nav>
    <div className="ml-auto flex items-center">
      <button className="mr-[10px] flex items-center gap-2 text-[13px]">
        <Ico box="0 0 20 20" className="h-5 w-5">
          <circle cx="9" cy="8" r="7" fill="#f9b92b" />
          <path d="M13 1l5 1v6l-3-2z" fill="#d8342b" />
          <path d="M4 19a4 4 0 0 1 0-8c1-4 8-4 9 0 6-2 9 7 3 8z" fill="#e8f0fa" />
        </Ico>
        21°C
      </button>
      <button aria-label="Iconos ocultos" className="flex w-[22px] justify-center"><ChevronUp size={18} strokeWidth={1.75} /></button>
      <StatusIcon name="Reunión" d="M3.500 5h7v7h-7zM10.500 8l2-2v5l-2-2M5 2.500c2-1 4-1 6 0M5 14.500c2 1 4 1 6 0" />
      <button aria-label="Sincronización" className="flex w-[23px] justify-center">
        <Ico box="0 0 16 16" className="h-4 w-4">
          <path d="M1 3h10l4-2v9M1 3v11h8M5 6h3M5 6v5h3M5 8.500h2" stroke="#f0f0f0" strokeWidth="1.200" />
          <circle cx="12.500" cy="12.500" r="3.500" fill="#2a78d0" />
        </Ico>
      </button>
      <StatusIcon name="Red" d="M4 3.500h11v8H4M9.500 11.500V15M6 14.500h7M1 1.500h4v4H1zM3 5v9" />
      <StatusIcon name="Volumen" d="M1 6h2l3-3v10l-3-3H1zM8.500 6c1 1 1 3 0 4M11 4.500c2 2 2 5 0 7M13.500 3c3 3 3 7 0 10" />
      <button className="ml-[7px] text-[11px]">ESP</button>
      <button className="ml-2 w-16 pb-[2px] text-center font-['Open_Sans',sans-serif] text-[11px] leading-4">
        <time dateTime="2022-04-29T15:25">
          <span className="block">15:25</span>
          <span className="block">29/04/2022</span>
        </time>
      </button>
      <button aria-label="2 notificaciones" className="relative ml-[10px] flex h-6 w-6 items-start">
        <Ico box="0 0 16 16" className="h-4 w-4">
          <path d="M0 1h16v11H7l-3 4v-4H0z" fill="#fff" />
          <path d="M3 4h10M3 6.500h10M3 9h7" stroke="#1b2842" />
        </Ico>
        <span className="absolute bottom-0 right-0 flex h-4 w-4 items-center justify-center rounded-full border border-[#888] bg-[#2b2f38] text-[10px] leading-none">2</span>
      </button>
      <button aria-label="Mostrar escritorio" className="ml-3 h-[37px] w-[5px] border-l border-[#6b7385]" />
    </div>
  </footer>
)

export default function App() {
  return (
    <div className="flex min-h-screen flex-col overflow-hidden bg-white font-['Roboto',sans-serif]">
      <TitleBar />
      <QuickBar />
      <Ribbon />
      <Viewport />
      <Timeline />
      <Taskbar />
    </div>
  )
}
